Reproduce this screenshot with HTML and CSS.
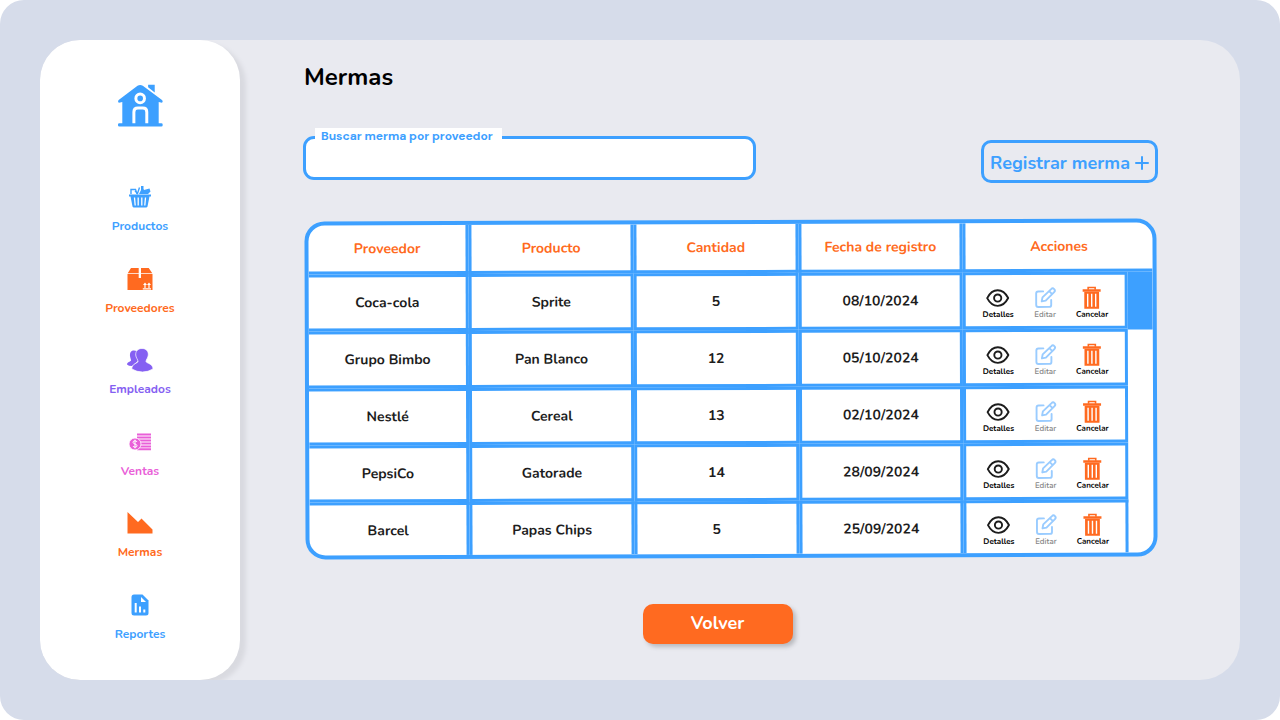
FILE: index.html
```html
<!DOCTYPE html>
<html lang="es">
<head>
<meta charset="utf-8">
<meta name="viewport" content="width=device-width, initial-scale=1">
<title>Mermas</title>
<link rel="stylesheet" href="styles.css">
</head>
<body>
<svg class="defs" aria-hidden="true">
  <symbol id="eye" viewBox="0 0 24 24">
    <path d="M1.500 12C4 7.200 7.500 4.200 12 4.200S20 7.200 22.500 12C20 16.800 16.500 19.800 12 19.800S4 16.800 1.500 12Z" fill="none" stroke="currentColor" stroke-width="1.900" stroke-linejoin="round"/>
    <circle cx="12" cy="12" r="3.600" fill="none" stroke="currentColor" stroke-width="1.900"/>
  </symbol>
  <symbol id="edit" viewBox="0 0 24 24">
    <path d="M10.500 5.500H5.500A2 2 0 0 0 3.500 7.500V19A2 2 0 0 0 5.500 21H16.500A2 2 0 0 0 18.500 19V14M9 15.500L9.800 11.500L18.500 3.200A2 2 0 0 1 21.500 6.200L13 14.700ZM16.500 5.200L19.500 8.200" fill="none" stroke="currentColor" stroke-width="1.900" stroke-linejoin="round" stroke-linecap="round"/>
  </symbol>
  <symbol id="trash" viewBox="0 0 24 24">
    <path d="M8.500 4V1.800H15.500V4" fill="none" stroke="currentColor" stroke-width="1.600"/>
    <path d="M3 3.600H21V6H3Z" fill="currentColor"/>
    <path d="M4.600 6H19.400V23H4.600ZM7.300 8V21H8.700V8ZM11.300 8V21H12.700V8ZM15.300 8V21H16.700V8Z" fill="currentColor" fill-rule="evenodd"/>
  </symbol>
</svg>
<div class="frame">
  <aside class="sidebar">
    <a class="home" href="#" aria-label="Inicio">
      <svg viewBox="84 44 136 127" aria-hidden="true">
        <path d="M143 48Q151 43 159 48L217 91Q221 96 217 99L207 97V161H215A4 4 0 0 1 219 165V167A4 4 0 0 1 215 171H88A4 4 0 0 1 84 167V165A4 4 0 0 1 88 161H97V97L87 99Q82 97 86 91ZM175 45H195V68L175 52Z" fill="currentColor"/>
        <circle cx="151" cy="86" r="13" fill="none" stroke="#fff" stroke-width="9"/>
        <path d="M132 161V127Q132 115 144 115H159Q171 115 171 127V161" fill="none" stroke="#fff" stroke-width="9"/>
      </svg>
    </a>
    <nav class="menu" aria-label="Principal">
      <a class="item blue" href="#">
        <svg width="24" height="24" viewBox="0 0 24 24" aria-hidden="true">
          <path d="M1 9.500H23V11.500H21.500L19.500 21.500Q19.300 22.500 18 22.500H6Q4.700 22.500 4.500 21.500L2.500 11.500H1Z" fill="currentColor"/>
          <path d="M6.500 12.500L7.200 20.500M10.200 12.500V20.500M13.800 12.500V20.500M17.500 12.500L16.800 20.500" stroke="#fff" stroke-width="1.300" fill="none"/>
          <path d="M3 9V4.500H7.500L9 9M7 6L9.500 8.500L11.500 2.500" fill="none" stroke="currentColor" stroke-width="1.400"/>
          <path d="M13 1H15.500V4L17.500 7V9H11L13 5ZM16 5L21.500 3.500L22.500 6.500L20 9H17Z" fill="currentColor"/>
        </svg>
        <span>Productos</span>
      </a>
      <a class="item orange" href="#">
        <svg width="26" height="24" viewBox="0 0 26 24" aria-hidden="true">
          <path d="M4 1H11.700V6.300H0.700ZM14 1H21.700L25.300 6.300H14Z" fill="currentColor"/>
          <path d="M0.500 7H11.700V11H14V7H25.500V23H0.500Z" fill="currentColor"/>
          <path d="M15.800 21.800H24M18 21V17M22 21V17" stroke="#fff" stroke-width="1.200"/>
          <path d="M16 18L18 15.500L20 18ZM20 18L22 15.500L24 18Z" fill="#fff"/>
        </svg>
        <span>Proveedores</span>
      </a>
      <a class="item purple" href="#">
        <svg width="26" height="24" viewBox="0 0 26 24" aria-hidden="true">
          <path d="M7 2.500C3.500 2.500 2.800 5 3 8C3.200 10 4 11 4 12.500C3.500 13.800 0 14 0 16.500Q1.500 18 5 18L12 12V4Q10 2.500 7 2.500Z" fill="currentColor"/>
          <path d="M15 .5C10.500 .5 8.500 3.500 8.700 7C9 10 11 11.500 11 13.500C10.500 15.500 4.800 15.500 4.800 21Q10 24 15.500 24T26 21C26 15.500 19.500 15.500 19 13.500C19 11.500 21 10 21.300 7C21.500 3.500 19.500 .5 15 .5Z" fill="currentColor" stroke="#fff" stroke-width=".7"/>
        </svg>
        <span>Empleados</span>
      </a>
      <a class="item pink" href="#">
        <svg width="22" height="18" viewBox="0 0 22 18" aria-hidden="true">
          <path d="M8 1.500H22M8 4.500H22M8 7.500H22M8 10.500H22M8 13.500H22M8 16.200H22" stroke="currentColor" stroke-width="2"/>
          <circle cx="6" cy="11" r="6" fill="currentColor" stroke="#fff" stroke-width=".8"/>
          <path d="M8 9Q7.500 7.800 6 7.800Q4 7.800 4 9.300Q4 10.500 6 11T8 12.700Q8 14.200 6 14.200Q4.400 14.200 4 13M6 6.700V15.300" fill="none" stroke="#fff" stroke-width="1"/>
        </svg>
        <span>Ventas</span>
      </a>
      <a class="item orange" href="#" aria-current="page">
        <svg width="26" height="22" viewBox="0 0 26 22" aria-hidden="true"><path d="M.5 0L11 10L14.500 6.500L25.500 17.500V21.500H.5Z" fill="currentColor"/></svg>
        <span>Mermas</span>
      </a>
      <a class="item blue" href="#">
        <svg width="18" height="22" viewBox="0 0 18 22" aria-hidden="true">
          <path d="M3 .5H11.500L17.500 6.500V19Q17.500 21.500 15 21.500H3Q.5 21.500 .5 19V3Q.5 .5 3 .5Z" fill="currentColor"/>
          <path d="M10 3V8H15Z" fill="#fff"/>
          <path d="M4.700 9V18.500M9 12.500V18.500M13.300 15.500V18.500" stroke="#fff" stroke-width="2"/>
        </svg>
        <span>Reportes</span>
      </a>
    </nav>
  </aside>

  <main class="content">
    <h1>Mermas</h1>
    <div class="toolbar">
      <div class="search">
        <label for="buscar">Buscar merma por proveedor</label>
        <input id="buscar" type="text">
      </div>
      <button class="register" type="button">Registrar merma
        <svg width="14" height="14" viewBox="0 0 14 14" aria-hidden="true"><path d="M7 1V13M1 7H13" stroke="currentColor" stroke-width="2" stroke-linecap="round"/></svg>
      </button>
    </div>

    <div class="grid">
      <table>
        <colgroup><col class="c-first"><col class="c-mid"><col class="c-mid"><col class="c-mid"><col class="c-mid"><col></colgroup>
        <thead>
          <tr><th>Proveedor</th><th>Producto</th><th>Cantidad</th><th>Fecha de registro</th><th colspan="2">Acciones</th></tr>
        </thead>
        <tbody>
          <tr><td>Coca-cola</td><td>Sprite</td><td>5</td><td>08/10/2024</td>
            <td class="actions"><div><button type="button"><svg><use href="#eye"/></svg>Detalles</button><button type="button" class="edit"><svg><use href="#edit"/></svg>Editar</button><button type="button" class="cancel"><svg><use href="#trash"/></svg>Cancelar</button></div></td>
            <td class="track" rowspan="5"><div class="thumb"></div></td></tr>
          <tr><td>Grupo Bimbo</td><td>Pan Blanco</td><td>12</td><td>05/10/2024</td>
            <td class="actions"><div><button type="button"><svg><use href="#eye"/></svg>Detalles</button><button type="button" class="edit"><svg><use href="#edit"/></svg>Editar</button><button type="button" class="cancel"><svg><use href="#trash"/></svg>Cancelar</button></div></td></tr>
          <tr><td>Nestlé</td><td>Cereal</td><td>13</td><td>02/10/2024</td>
            <td class="actions"><div><button type="button"><svg><use href="#eye"/></svg>Detalles</button><button type="button" class="edit"><svg><use href="#edit"/></svg>Editar</button><button type="button" class="cancel"><svg><use href="#trash"/></svg>Cancelar</button></div></td></tr>
          <tr><td>PepsiCo</td><td>Gatorade</td><td>14</td><td>28/09/2024</td>
            <td class="actions"><div><button type="button"><svg><use href="#eye"/></svg>Detalles</button><button type="button" class="edit"><svg><use href="#edit"/></svg>Editar</button><button type="button" class="cancel"><svg><use href="#trash"/></svg>Cancelar</button></div></td></tr>
          <tr><td>Barcel</td><td>Papas Chips</td><td>5</td><td>25/09/2024</td>
            <td class="actions"><div><button type="button"><svg><use href="#eye"/></svg>Detalles</button><button type="button" class="edit"><svg><use href="#edit"/></svg>Editar</button><button type="button" class="cancel"><svg><use href="#trash"/></svg>Cancelar</button></div></td></tr>
        </tbody>
      </table>
    </div>

    <button class="back" type="button">Volver</button>
  </main>
</div>
</body>
</html>
```
FILE: styles.css
```css
:root {
  --blue: #3da0ff;
  --orange: #ff6a20;
}

* { box-sizing: border-box; }

html { background: #fff; }

body {
  margin: 0;
  font-family: Nunito, "Open Sans", "Noto Sans", sans-serif;
  font-weight: 700;
  min-height: 100vh;
  padding: 40px;
  display: flex;
  background: #d6dcea;
  border-radius: 24px;
}

button {
  font: inherit;
  cursor: pointer;
}

.defs { display: none; }

.frame {
  flex: 1;
  display: flex;
  background: #e9eaf0;
  border-radius: 40px;
  overflow: hidden;
}

.sidebar {
  width: 200px;
  flex: none;
  display: flex;
  flex-direction: column;
  align-items: center;
  padding: 44px 0 38px;
  background: #fff;
  border-radius: 40px;
  box-shadow: 6px 4px 4px #d9dae0;
}

.home {
  display: block;
  color: var(--blue);
  margin-bottom: 56px;
}

.home svg {
  display: block;
  width: 45px;
  height: 43px;
}

.menu {
  flex: 1;
  display: flex;
  flex-direction: column;
  justify-content: space-between;
}

.item {
  display: grid;
  grid-template-rows: 28px 16px;
  gap: 7px;
  place-items: center;
  font-size: 12px;
  line-height: 16px;
  text-decoration: none;
}

.blue { color: var(--blue); }
.orange { color: var(--orange); }
.purple { color: #8560f2; }
.pink { color: #e95fd8; }

.content {
  flex: 1;
  display: flex;
  flex-direction: column;
  padding: 20px 82px 32px 63px;
}

h1 {
  margin: 0 1px 41px;
  font-size: 24px;
  line-height: 35px;
  font-weight: 700;
  color: #000;
}

.toolbar {
  display: flex;
  justify-content: space-between;
  align-items: flex-end;
  margin-bottom: 37px;
}

.search {
  position: relative;
  width: 53%;
  margin-bottom: 3px;
}

.search input {
  display: block;
  width: 100%;
  height: 44px;
  padding: 4px 16px;
  border: 3px solid var(--blue);
  border-radius: 11px;
  background: #fff;
  font: inherit;
}

.search label {
  position: absolute;
  left: 12px;
  top: -8px;
  padding: 0 9px 0 6px;
  background: #fff;
  color: var(--blue);
  font-family: "DM Sans", Inter, sans-serif;
  font-size: 12px;
  line-height: 16px;
}

.register {
  display: flex;
  align-items: center;
  gap: 5px;
  height: 43px;
  padding: 2px 6px 0;
  border: 3px solid var(--blue);
  border-radius: 10px;
  background: transparent;
  color: var(--blue);
  font-size: 18px;
  white-space: nowrap;
}

/* The sheet leans slightly to the left. */
.grid {
  margin: 0 1px 46px 2px;
  border: 4px solid var(--blue);
  border-radius: 20px;
  background: #fff;
  overflow: hidden;
  transform: rotate(-0.2deg);
}

table {
  width: 100%;
  table-layout: fixed;
  border-spacing: 0;
  font-size: 14px;
  color: #1d1d1d;
}

.c-first { width: 19%; }
.c-mid { width: 19.5%; }

th, td {
  height: 57px;
  padding: 0;
  border: 3px solid var(--blue);
  text-align: center;
}

th {
  height: 49px;
  border-top: 0;
  color: var(--orange);
}

th:first-child, tbody td:first-child { border-left: 0; }
th:last-child { border-right: 0; }
tbody tr:last-child td { height: 53px; border-bottom: 0; }

tbody .track {
  border: 0;
  vertical-align: top;
}

.thumb {
  height: 58px;
  background: var(--blue);
}

.actions div {
  display: flex;
  justify-content: center;
  padding-top: 4px;
}

.actions button {
  width: 47px;
  padding: 0;
  border: 0;
  background: none;
  color: #000;
  display: flex;
  flex-direction: column;
  align-items: center;
  font-size: 8px;
  line-height: 10px;
}

.actions svg {
  width: 24px;
  height: 24px;
  color: #1d1d1d;
}

.actions .edit {
  color: #858585;
  font-weight: 600;
}

.actions .edit svg { color: #9accff; }
.actions .cancel svg { color: var(--orange); }

.back {
  align-self: center;
  width: 150px;
  height: 40px;
  margin-right: 26px;
  padding: 0 0 2px;
  border: 0;
  border-radius: 10px;
  background: var(--orange);
  color: #fff;
  font-size: 18px;
  box-shadow: 3px 3px 4px #b9babf;
}
```
